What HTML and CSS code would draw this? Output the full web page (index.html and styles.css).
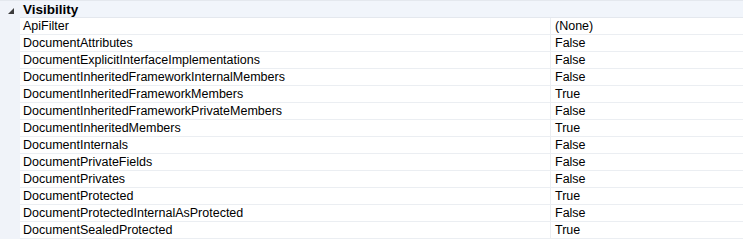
FILE: index.html
```html
<!DOCTYPE html>
<html>
<head>
<meta charset="utf-8">
<link rel="stylesheet" href="styles.css">
</head>
<body>
<div class="grid">
  <div class="row header">
    <div class="gutter"><svg class="tri" width="6" height="6" viewBox="0 0 6 6"><polygon points="6,0 6,6 0,6" fill="#3c3c3c"/></svg></div>
    <div class="cat">Visibility</div>
  </div>
  <div class="row"><div class="gutter"></div><div class="name">ApiFilter</div><div class="value">(None)</div></div>
  <div class="row"><div class="gutter"></div><div class="name">DocumentAttributes</div><div class="value">False</div></div>
  <div class="row"><div class="gutter"></div><div class="name">DocumentExplicitInterfaceImplementations</div><div class="value">False</div></div>
  <div class="row"><div class="gutter"></div><div class="name">DocumentInheritedFrameworkInternalMembers</div><div class="value">False</div></div>
  <div class="row"><div class="gutter"></div><div class="name">DocumentInheritedFrameworkMembers</div><div class="value">True</div></div>
  <div class="row"><div class="gutter"></div><div class="name">DocumentInheritedFrameworkPrivateMembers</div><div class="value">False</div></div>
  <div class="row"><div class="gutter"></div><div class="name">DocumentInheritedMembers</div><div class="value">True</div></div>
  <div class="row"><div class="gutter"></div><div class="name">DocumentInternals</div><div class="value">False</div></div>
  <div class="row"><div class="gutter"></div><div class="name">DocumentPrivateFields</div><div class="value">False</div></div>
  <div class="row"><div class="gutter"></div><div class="name">DocumentPrivates</div><div class="value">False</div></div>
  <div class="row"><div class="gutter"></div><div class="name">DocumentProtected</div><div class="value">True</div></div>
  <div class="row"><div class="gutter"></div><div class="name">DocumentProtectedInternalAsProtected</div><div class="value">False</div></div>
  <div class="row"><div class="gutter"></div><div class="name">DocumentSealedProtected</div><div class="value">True</div></div>
</div>
</body>
</html>
```

FILE: styles.css
```css
html, body {
  margin: 0;
  padding: 0;
  background: #ffffff;
}
body {
  font-family: "Liberation Sans", Arial, sans-serif;
  font-size: 12.5px;
  color: #000;
}
.grid {
  display: flex;
  flex-direction: column;
  border-top: 1px solid #e4e8ee;
}
.row {
  display: grid;
  grid-template-columns: 20px 530px 1fr;
  height: 17px;
}
.gutter {
  background: #f0f3f9;
  display: flex;
  align-items: center;
  justify-content: center;
}
.name, .value {
  line-height: 17px;
  height: 16px;
  border-bottom: 1px solid #ebeef2;
  padding-left: 3px;
  white-space: nowrap;
  overflow: hidden;
}
.value {
  border-left: 1px solid #ebeef2;
  padding-left: 4px;
}
.header {
  grid-template-columns: 20px 1fr;
}
.cat {
  background: #f1f5fb;
  font-weight: bold;
  font-size: 13.5px;
  line-height: 17px;
  height: 16px;
  border-bottom: 1px solid #e4e8ee;
  padding-left: 3px;
  overflow: hidden;
}
.tri {
  margin-left: 1px;
  margin-top: 3px;
}
```
